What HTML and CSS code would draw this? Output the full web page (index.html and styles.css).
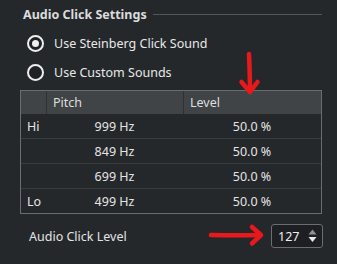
FILE: index.html
```html
<!DOCTYPE html>
<html>
<head>
<meta charset="utf-8">
<link rel="stylesheet" href="styles.css">
</head>
<body>
<div class="panel">
  <div class="title-row">
    <span class="title">Audio Click Settings</span>
    <span class="rule"></span>
  </div>
  <div class="radio-row first">
    <span class="radio checked"><span class="dot"></span></span>
    <span class="label">Use Steinberg Click Sound</span>
  </div>
  <div class="radio-row">
    <span class="radio"></span>
    <span class="label">Use Custom Sounds</span>
  </div>
  <div class="table">
    <div class="row head">
      <div class="cell c0"></div>
      <div class="cell c1">Pitch</div>
      <div class="cell c2">Level</div>
    </div>
    <div class="row">
      <div class="cell c0">Hi</div>
      <div class="cell c1 num">999 Hz</div>
      <div class="cell c2 num">50.0 %</div>
    </div>
    <div class="row">
      <div class="cell c0"></div>
      <div class="cell c1 num">849 Hz</div>
      <div class="cell c2 num">50.0 %</div>
    </div>
    <div class="row">
      <div class="cell c0"></div>
      <div class="cell c1 num">699 Hz</div>
      <div class="cell c2 num">50.0 %</div>
    </div>
    <div class="row last">
      <div class="cell c0">Lo</div>
      <div class="cell c1 num">499 Hz</div>
      <div class="cell c2 num">50.0 %</div>
    </div>
  </div>
  <div class="level-row">
    <span class="level-label">Audio Click Level</span>
    <div class="spin">
      <span class="spin-val">127</span>
      <span class="spin-arrows">
        <svg width="9" height="14" viewBox="0 0 9 14"><path d="M4.5 0.5 L8.5 5.5 H0.5 Z" fill="#8f9295"/><path d="M0.5 8 H8.5 L4.5 13 Z" fill="#e8e8e8"/></svg>
      </span>
    </div>
  </div>
</div>
<svg class="annot" width="337" height="264" viewBox="0 0 337 264">
  <g fill="none" stroke="#e8191b" stroke-width="4.5" stroke-linecap="round" stroke-linejoin="round">
    <path d="M249 54 C249.5 66 250 78 250 91"/>
    <path d="M241.5 82 L250 92 L257.5 82"/>
    <path d="M211 235 C228 235.5 243 235.5 259 235"/>
    <path d="M252 227 L261 235 L252 243.5"/>
  </g>
</svg>
</body>
</html>
```
FILE: styles.css
```css
html, body {
  margin: 0;
  padding: 0;
}
body {
  width: 337px;
  height: 264px;
  overflow: hidden;
  background: #25282b;
  color: #e4e4e4;
  font-family: "Noto Sans", "Open Sans", sans-serif;
  font-size: 12.5px;
  position: relative;
}
.panel {
  padding: 4px 14px 0 20px;
}
.title-row {
  display: flex;
  align-items: center;
  height: 20px;
  padding-left: 3px;
  gap: 6px;
}
.title {
  font-weight: bold;
  font-size: 12.5px;
  color: #dcdcdc;
}
.rule {
  flex: 1;
  height: 1px;
  background: #53565a;
  margin-right: 1px;
}
.radio-row {
  display: flex;
  align-items: center;
  height: 29px;
  padding-left: 7px;
  gap: 10px;
}
.radio-row.first {
  margin-top: 5px;
}
.radio {
  width: 17px;
  height: 17px;
  box-sizing: border-box;
  border: 2px solid #eeeeee;
  border-radius: 50%;
  display: flex;
  align-items: center;
  justify-content: center;
  background: #1f2124;
}
.dot {
  width: 7px;
  height: 7px;
  border-radius: 50%;
  background: #eeeeee;
}
.label {
  color: #e8e8e8;
}
.table {
  margin-top: 3px;
  border: 1px solid #6a6d70;
  width: 302px;
  box-sizing: border-box;
}
.row {
  display: grid;
  grid-template-columns: 25px 137px 1fr;
  height: 25px;
  border-bottom: 1px solid #393c3f;
  box-sizing: border-box;
  align-items: center;
}
.row.head {
  height: 23px;
  border-bottom: none;
  background: #404447;
}
.row.last {
  border-bottom: none;
  height: 24px;
}
.head .cell {
  height: 23px;
  line-height: 23px;
  padding-left: 6px;
  border-left: 1px solid #2e3134;
  color: #dedede;
}
.head .c0 {
  border-left: none;
  padding-left: 0;
}
.cell {
  white-space: nowrap;
}
.c0 {
  padding-left: 6px;
}
.num {
  text-align: center;
}
.row .c2.num {
  padding-left: 0;
}
.level-row {
  display: flex;
  align-items: center;
  justify-content: space-between;
  margin-top: 10px;
  width: 303px;
  padding-left: 9px;
  box-sizing: border-box;
}
.spin {
  width: 52px;
  height: 24px;
  box-sizing: border-box;
  border: 1px solid #6b6e71;
  border-radius: 3px;
  background: #1d1f22;
  display: flex;
  align-items: center;
  padding-left: 6px;
  padding-right: 5px;
  justify-content: space-between;
}
.spin-val {
  color: #eeeeee;
}
.spin-arrows {
  display: flex;
}
.annot {
  position: absolute;
  left: 0;
  top: 0;
  pointer-events: none;
}
```
